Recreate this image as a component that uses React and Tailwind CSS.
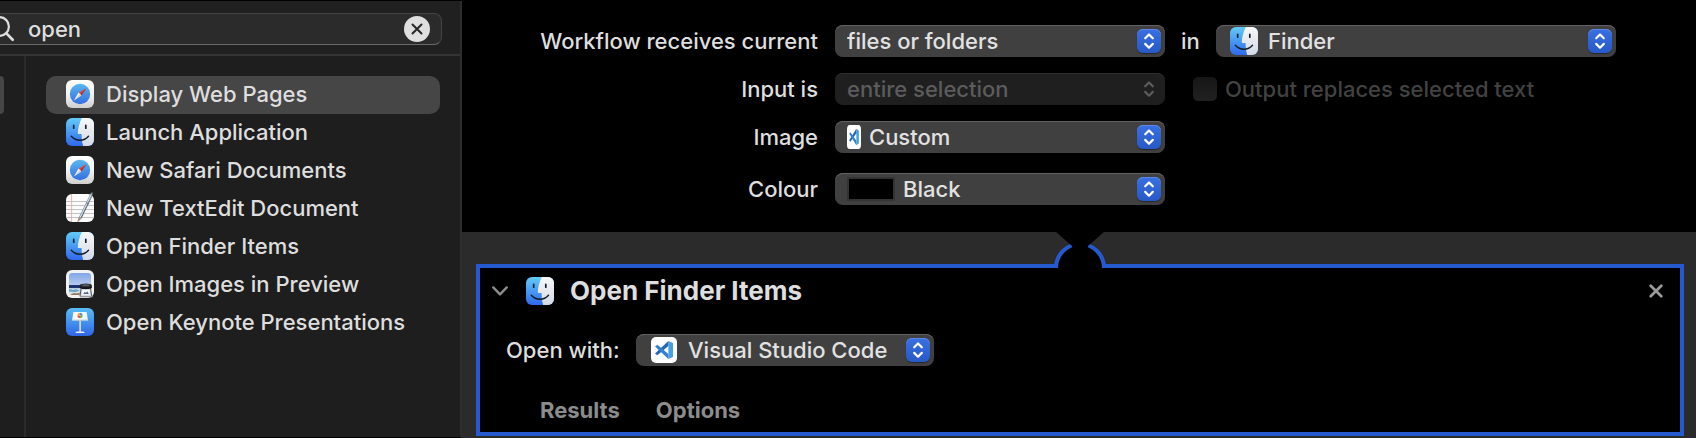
import React from "react";

function SafariIcon({ className }) {
  return (
    <svg className={className} viewBox="0 0 28 28" aria-hidden="true">
      <defs>
        <linearGradient id="safariPlate" x1="0" y1="0" x2="0" y2="1">
          <stop offset="0" stopColor="#ffffff" />
          <stop offset="0.5" stopColor="#f4f4f4" />
          <stop offset="1" stopColor="#cfcfcf" />
        </linearGradient>
        <linearGradient id="safariDial" x1="0" y1="0" x2="0" y2="1">
          <stop offset="0" stopColor="#5ab7f0" />
          <stop offset="1" stopColor="#3570e0" />
        </linearGradient>
      </defs>
      <rect width="28" height="28" rx="6" fill="url(#safariPlate)" />
      <circle cx="14" cy="14" r="10.2" fill="url(#safariDial)" />
      <path d="M20.2 8.4 12.6 12.6 15.4 15.4Z" fill="#e8473c" />
      <path d="M20.2 8.4 14 14l1.4 1.4Z" fill="#a8342f" />
      <path d="M8 20.2 12.6 12.6 15.4 15.4Z" fill="#f4f6f8" />
      <path d="M8 20.2 14 14l1.4 1.4Z" fill="#c9ced4" />
    </svg>
  );
}

function FinderIcon({ className }) {
  return (
    <svg className={className} viewBox="0 0 28 28" aria-hidden="true">
      <defs>
        <linearGradient id="finderBlue" x1="0" y1="0" x2="0" y2="1">
          <stop offset="0" stopColor="#62cbf8" />
          <stop offset="1" stopColor="#2f68ec" />
        </linearGradient>
        <linearGradient id="finderWhite" x1="0" y1="0" x2="0" y2="1">
          <stop offset="0" stopColor="#f8f8f9" />
          <stop offset="1" stopColor="#d3dae5" />
        </linearGradient>
        <clipPath id="finderClip">
          <rect width="28" height="28" rx="6" />
        </clipPath>
      </defs>
      <g clipPath="url(#finderClip)">
        <rect width="28" height="28" fill="url(#finderBlue)" />
        <path
          d="M15.8 0C13.4 4.8 12 10 11.8 15.3q0 .7.7.7h3.1c0 4.4.4 8.4 1.6 12H28V0Z"
          fill="url(#finderWhite)"
        />
      </g>
      <path d="M7.7 7.4v2.8M19.8 7.4v2.8" stroke="#14202f" strokeWidth="1.7" strokeLinecap="round" />
      <path
        d="M5.3 18.2c4.8 5.3 12.6 5.3 17.2 0"
        fill="none"
        stroke="#111a26"
        strokeWidth="1.4"
        strokeLinecap="round"
      />
    </svg>
  );
}

function TextEditIcon({ className }) {
  return (
    <svg className={className} viewBox="0 0 28 28" overflow="visible" aria-hidden="true">
      <rect width="28" height="28" rx="6" fill="#fbfbfb" />
      <path d="M0 7.5h28M0 11.5h28M0 15.5h28M0 19.5h28M0 23.5h28" stroke="#c3c3c3" strokeWidth="1" />
      <path d="M5.6 0v28" stroke="#eba9ab" strokeWidth="0.9" />
      <path d="M11.4 28.3 12.8 23.6 24.5-.6q1.2-1.6 2.6-.6L15.2 24.4Z" fill="#7c8794" />
      <path d="M14.1 23.5 25.4.2" stroke="#cfe3f3" strokeWidth="1.1" />
      <path d="M15.2 24.3 27-.2" stroke="#3d4957" strokeWidth="0.7" />
      <path d="m11.4 28.3 1.4-4.7 2.4.8Z" fill="#a98f75" />
      <path d="M20.1 8.7 23 10" stroke="#4c5a69" strokeWidth="0.8" />
    </svg>
  );
}

function PreviewIcon({ className }) {
  return (
    <svg className={className} viewBox="0 0 28 28" aria-hidden="true">
      <defs>
        <linearGradient id="previewSky" x1="0" y1="0" x2="0" y2="1">
          <stop offset="0" stopColor="#7fa6e6" />
          <stop offset="1" stopColor="#bccdf2" />
        </linearGradient>
        <clipPath id="previewPhoto">
          <rect x="3" y="3" width="22" height="22" rx="3" />
        </clipPath>
      </defs>
      <rect width="28" height="28" rx="6" fill="#f1f1f1" />
      <g clipPath="url(#previewPhoto)">
        <rect x="3" y="3" width="22" height="13" fill="url(#previewSky)" />
        <rect x="3" y="15" width="22" height="3.6" fill="#1f3470" />
        <rect x="3" y="18.2" width="22" height="7" fill="#c9e2ea" />
        <path d="m3 19 4 1 3-.8 4 1.6-5 1.1-6-.5Z" fill="#6f9fbd" />
        <path d="m4 24.8 4-1.9 3 .7 3-1v2.6H4Z" fill="#9b7457" />
      </g>
      <path d="m14.6 17.5-1.5 9.3h13.4L25 17.5Z" fill="#d7dade" />
      <path d="m15.2 17.8-1.2 8.4M24.5 17.8l1.1 8.4" stroke="#55595e" strokeWidth="1" />
      <path d="M16.4 20h7l.6 4.8h-8.1Z" fill="#f7f8fa" />
      <path d="m17.3 24 1.5-2.2 1.1 1.2 1.4-1.7 1.5 2.7Z" fill="#526789" />
      <path d="M13.7 15.5v2c0 2.2 12.2 2.2 12.2 0v-2Z" fill="#16171a" />
      <ellipse cx="19.8" cy="15.4" rx="6.1" ry="1.9" fill="#2c2e32" />
      <ellipse cx="19.8" cy="15.2" rx="3.6" ry="0.9" fill="#5b5f66" />
      <path d="M14 26.8h12.5" stroke="#7c8085" strokeWidth="1" />
    </svg>
  );
}

function KeynoteIcon({ className }) {
  return (
    <svg className={className} viewBox="0 0 28 28" aria-hidden="true">
      <defs>
        <linearGradient id="keynotePlate" x1="0" y1="0" x2="0" y2="1">
          <stop offset="0" stopColor="#58bdf7" />
          <stop offset="1" stopColor="#2f66e6" />
        </linearGradient>
      </defs>
      <rect width="28" height="28" rx="6" fill="url(#keynotePlate)" />
      <path d="M7.4 4h13.2l1.3 8H6.1Z" fill="#f6f7f9" />
      <path d="M5.9 11.6h16.3v1.2H5.9Z" fill="#c7ccd3" />
      <path d="M13.4 12.8h1.4v11h-1.4Z" fill="#eceef1" />
      <path d="M10.8 23.4h6.6l1.7 1.6H9.1Z" fill="#f2f3f5" />
      <path d="M14 7.4V4.8a2.6 2.6 0 0 1 2.6 2.6Z" fill="#3d9be8" />
      <path d="M14 7.4h2.6A2.6 2.6 0 0 1 14 10Z" fill="#5cbb55" />
      <path d="M14 7.4V10a2.6 2.6 0 0 1-2.6-2.6Z" fill="#e65045" />
      <path d="M14 7.4h-2.6A2.6 2.6 0 0 1 14 4.8Z" fill="#efa83d" />
    </svg>
  );
}

function CodeIcon({ className }) {
  return (
    <svg className={className} viewBox="0 0 26 26" preserveAspectRatio="none" aria-hidden="true">
      <rect width="26" height="26" rx="5" fill="#ffffff" />
      <path d="M17.4 4 22 6.1v13.8L17.4 22Z" fill="#459fe3" />
      <path d="M17.4 4v5L6.3 18.2 4 16.4Z" fill="#2568b4" />
      <path d="M17.4 22v-5L6.3 7.8 4 9.6Z" fill="#3281cf" />
    </svg>
  );
}

function Stepper({ disabled }) {
  return (
    <span
      className={
        disabled
          ? "pointer-events-none absolute right-1 top-1 flex size-6 items-center justify-center text-[#5c5c5c]"
          : "pointer-events-none absolute right-1 top-1 flex size-6 items-center justify-center rounded-md bg-linear-to-b from-[#3a6fe2] to-[#2759c6] text-white shadow-[inset_0_1px_0_#5c88ea,0_1px_1px_#00000066]"
      }
    >
      <svg className="size-6" viewBox="0 0 24 24" fill="none" stroke="currentColor" strokeWidth="2.2" strokeLinecap="round" strokeLinejoin="round" aria-hidden="true">
        <path d="m8.2 9.3 3.8-3.8 3.8 3.8M8.2 14.9l3.8 3.8 3.8-3.8" />
      </svg>
    </span>
  );
}

function Popup({ id, value, disabled, icon, className, inset = "pl-3" }) {
  return (
    <div className={`relative h-8 ${className}`}>
      <select
        id={id}
        disabled={disabled}
        defaultValue={value}
        className={`block h-8 w-full appearance-none rounded-lg pr-8 text-[22px] leading-8 outline-none ${inset} ${
          disabled
            ? "bg-[#1f1f1f] text-[#5c5c5c] opacity-100 shadow-[inset_0_1px_0_#2e2e2e]"
            : "bg-[#404040] text-[#e2e2e2] shadow-[inset_0_1px_0_#626262]"
        }`}
      >
        <option>{value}</option>
      </select>
      {icon}
      <Stepper disabled={disabled} />
    </div>
  );
}

const actions = [
  { name: "Display Web Pages", Icon: SafariIcon, selected: true },
  { name: "Launch Application", Icon: FinderIcon },
  { name: "New Safari Documents", Icon: SafariIcon },
  { name: "New TextEdit Document", Icon: TextEditIcon },
  { name: "Open Finder Items", Icon: FinderIcon },
  { name: "Open Images in Preview", Icon: PreviewIcon },
  { name: "Open Keynote Presentations", Icon: KeynoteIcon },
];

function Sidebar() {
  return (
    <aside className="flex w-[462px] shrink-0 flex-col border-b border-r-2 border-[#2d2d2d] border-b-black bg-[#1e1e1e]">
      <div className="border-b-2 border-[#343434] bg-[#202020] pb-[9px] pr-[18px] pt-3">
        <div className="flex h-8 items-center rounded-r-lg border border-l-0 border-[#444] border-b-[#6a6a6a] bg-[#2b2b2b] pr-[11px]">
          <svg className="h-8 w-7 shrink-0 text-[#dedede]" viewBox="0 0 28 32" fill="none" stroke="currentColor" strokeWidth="2.2" strokeLinecap="round" aria-hidden="true">
            <circle cx="-0.5" cy="13.5" r="9.4" />
            <path d="m6.4 20.4 6.3 6.3" strokeWidth="2.7" />
          </svg>
          <input
            type="text"
            aria-label="Search actions"
            defaultValue="open"
            className="h-8 min-w-0 flex-1 bg-transparent text-[22px] text-[#dedede] outline-none"
          />
          <button type="button" aria-label="Clear search" className="flex size-[26px] items-center justify-center rounded-full bg-[#dfdfdf] text-[#262626]">
            <svg className="size-[26px]" viewBox="0 0 26 26" stroke="currentColor" strokeWidth="2" strokeLinecap="round" aria-hidden="true">
              <path d="m8.5 8.5 9 9M17.5 8.5l-9 9" />
            </svg>
          </button>
        </div>
      </div>
      <div className="flex flex-1">
        <div className="w-[26px] border-r-2 border-[#2b2b2b] pt-5">
          <div className="h-[38px] w-1 rounded-r-md bg-[#464646]" />
        </div>
        <ul className="flex-1 px-5 pb-6 pt-5">
          {actions.map(({ name, Icon, selected }) => (
            <li key={name}>
              <button
                type="button"
                className={`flex h-[38px] w-full items-center gap-3 whitespace-nowrap rounded-[10px] px-5 pb-0.5 text-left text-[22px] text-[#dedede] ${
                  selected ? "bg-[#464646]" : ""
                }`}
              >
                <Icon className="size-7 shrink-0" />
                {name}
              </button>
            </li>
          ))}
        </ul>
      </div>
    </aside>
  );
}

function FormLabel({ htmlFor, children }) {
  return (
    <label htmlFor={htmlFor} className="w-[373px] shrink-0 whitespace-nowrap pr-[17px] text-right">
      {children}
    </label>
  );
}

function WorkflowSettings() {
  return (
    <section className="bg-black pb-[27px] pr-20 pt-[25px] text-[22px] leading-8 text-[#dedede]">
      <div className="flex h-8">
        <FormLabel htmlFor="receives">Workflow receives current</FormLabel>
        <Popup id="receives" value="files or folders" className="w-[330px] shrink-0" />
        <label htmlFor="app" className="w-[51px] shrink-0 pl-4">in</label>
        <Popup
          id="app"
          value="Finder"
          className="min-w-0 flex-1"
          inset="pl-[52px]"
          icon={<FinderIcon className="pointer-events-none absolute left-3.5 top-0.5 size-7" />}
        />
      </div>
      <div className="mt-4 flex h-8">
        <FormLabel htmlFor="input">Input is</FormLabel>
        <Popup id="input" value="entire selection" disabled className="w-[330px] shrink-0" />
        <label className="flex items-center gap-2 whitespace-nowrap pl-7 text-[#424242]">
          <input type="checkbox" disabled className="size-6 appearance-none rounded-[5px] bg-linear-to-b from-[#161616] to-[#212121]" />
          Output replaces selected text
        </label>
      </div>
      <div className="mt-4 flex h-8">
        <FormLabel htmlFor="image">Image</FormLabel>
        <Popup
          id="image"
          value="Custom"
          className="w-[330px] shrink-0"
          inset="pl-[34px]"
          icon={<CodeIcon className="pointer-events-none absolute left-3 top-1 h-6 w-[14px]" />}
        />
      </div>
      <div className="mt-5 flex h-8">
        <FormLabel htmlFor="colour">Colour</FormLabel>
        <Popup
          id="colour"
          value="Black"
          className="w-[330px] shrink-0"
          inset="pl-[68px]"
          icon={<span className="pointer-events-none absolute left-3 top-1 h-6 w-12 border-2 border-[#333] bg-black" />}
        />
      </div>
    </section>
  );
}

function Connector() {
  return (
    <svg className="absolute -top-9 left-1/2 h-9 w-[52px] -translate-x-1/2" viewBox="0 0 52 36" aria-hidden="true">
      <circle cx="26" cy="36" r="24" fill="#000" stroke="#2459cf" strokeWidth="4" />
      <path d="M2 0h48L34 14v10H18V14Z" fill="#000" />
    </svg>
  );
}

function ActionCard() {
  return (
    <div className="flex-1 bg-[#2b2b2b] pb-0.5 pl-[14px] pr-3 pt-8">
      <article className="relative border-4 border-[#2459cf] bg-black text-[22px] text-[#dedede]">
        <Connector />
        <header className="flex h-[45px] items-center pl-3 pr-[17px]">
          <button type="button" aria-label="Collapse action" className="text-[#8b8b8b]">
            <svg className="size-4" viewBox="0 0 16 16" fill="none" stroke="currentColor" strokeWidth="2.4" strokeLinecap="round" strokeLinejoin="round" aria-hidden="true">
              <path d="m1.3 4.4 6.7 7 6.7-7" />
            </svg>
          </button>
          <FinderIcon className="ml-[18px] size-7" />
          <h2 className="ml-4 flex-1 text-[26px] font-bold leading-8">Open Finder Items</h2>
          <button type="button" aria-label="Remove action" className="text-[#9b9b9b]">
            <svg className="size-[14px]" viewBox="0 0 14 14" stroke="currentColor" strokeWidth="2.7" strokeLinecap="round" aria-hidden="true">
              <path d="m1.7 1.7 10.6 10.6M12.3 1.7 1.7 12.3" />
            </svg>
          </button>
        </header>
        <div className="mt-[21px] flex h-8 leading-8">
          <label htmlFor="open-with" className="w-[156px] shrink-0 whitespace-nowrap pl-[26px]">Open with:</label>
          <Popup
            id="open-with"
            value="Visual Studio Code"
            className="w-[298px]"
            inset="pl-[52px]"
            icon={<CodeIcon className="pointer-events-none absolute left-[15px] top-[3px] size-[26px]" />}
          />
        </div>
        <div className="mb-[6px] mt-7 flex h-8 gap-9 pl-[60px] font-bold text-[#8c8c8c]">
          <button type="button">Results</button>
          <button type="button">Options</button>
        </div>
      </article>
    </div>
  );
}

export default function App() {
  return (
    <div className="flex min-h-screen border-t border-black bg-black font-[Inter,sans-serif] font-[450]">
      <Sidebar />
      <main className="-mt-px flex min-w-0 flex-1 flex-col">
        <WorkflowSettings />
        <ActionCard />
      </main>
    </div>
  );
}
